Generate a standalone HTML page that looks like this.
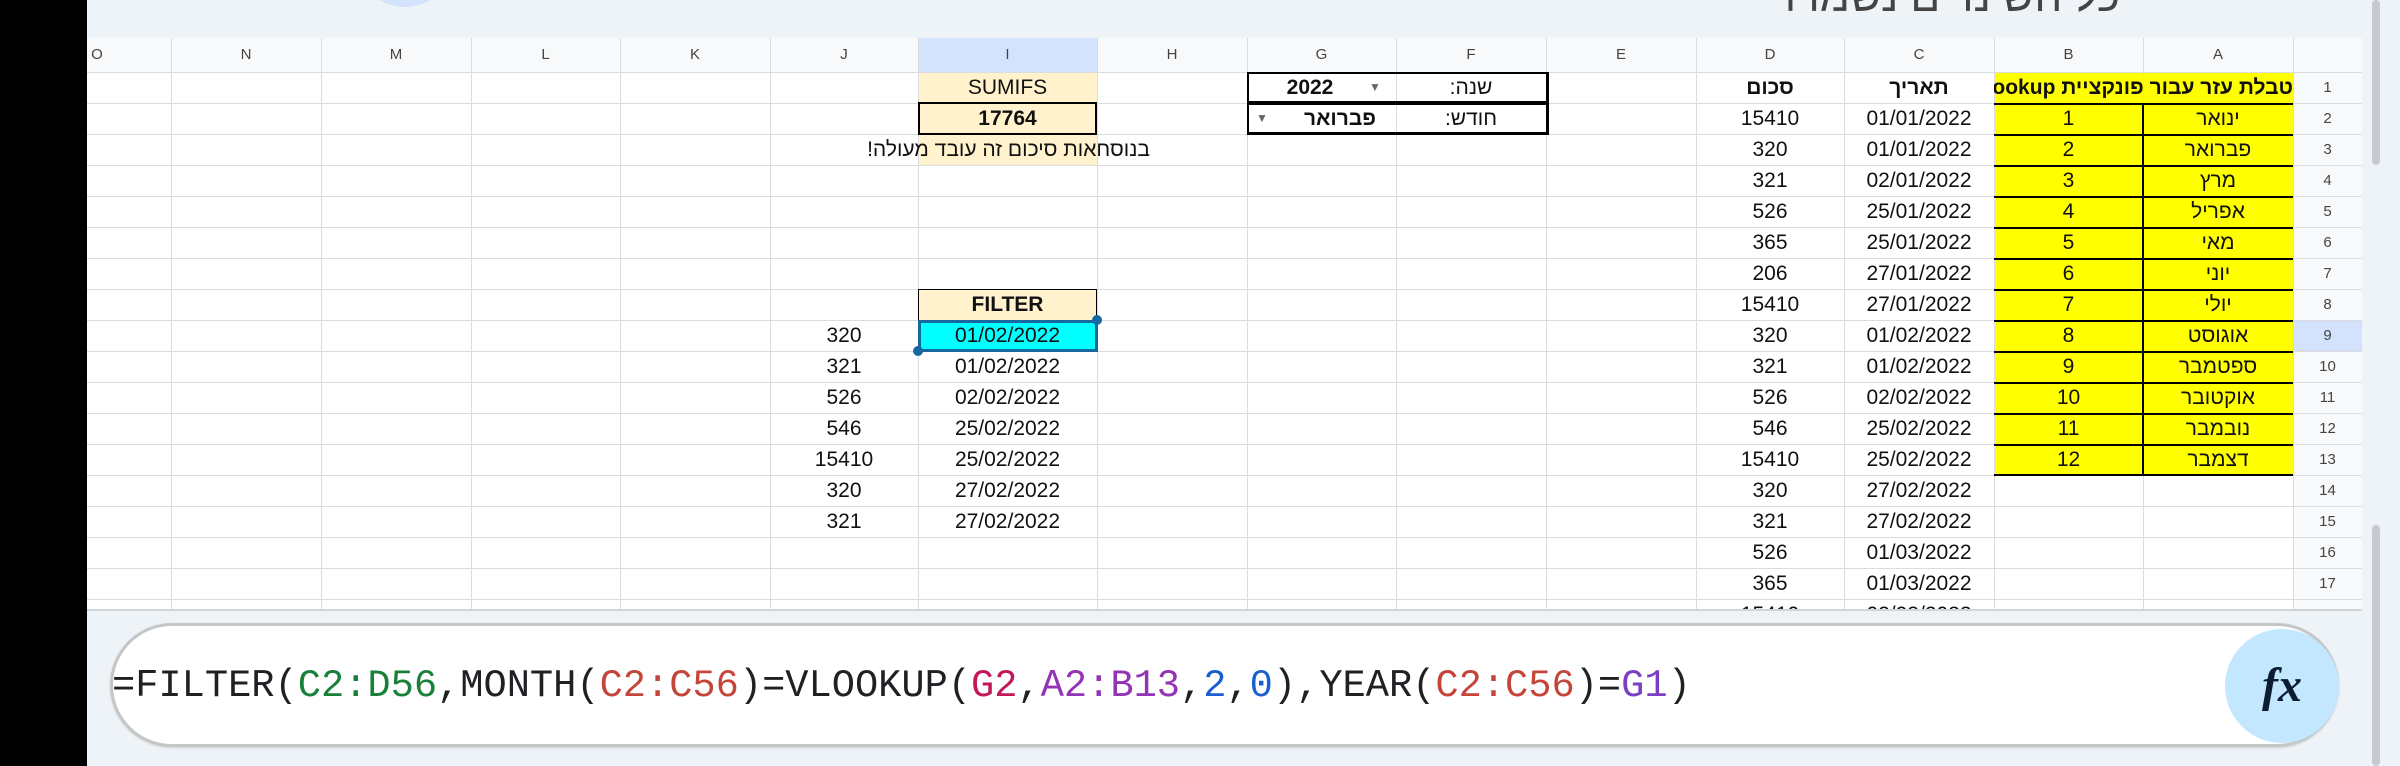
<!DOCTYPE html>
<html><head><meta charset="utf-8"><style>
*{margin:0;padding:0;box-sizing:border-box}
body{width:2400px;height:766px;overflow:hidden;background:#eef3f8;position:relative;font-family:"Liberation Sans","Noto Sans CJK JP",sans-serif}
.a{position:absolute}
.c{position:absolute;height:31px;line-height:31px;text-align:center;font-size:21px;color:#111;white-space:nowrap}
.b{font-weight:bold}
.h{position:absolute;top:38px;height:34px;line-height:34px;text-align:center;font-size:15px;color:#444}
.v{position:absolute;top:38px;width:1px;height:571px;background:#dadce0}
.hl{position:absolute;left:87px;width:2275px;height:1px;background:#dadce0}
.rn{position:absolute;left:2293px;width:69px;height:31px;line-height:31px;text-align:center;font-size:15px;color:#444}
.y{background:#ffff00}
.k{position:absolute;background:#000}
</style></head><body>
<div class="a" style="left:0;top:0;width:87px;height:766px;background:#000"></div>
<div class="a" style="left:365px;top:-55px;width:80px;height:62px;border-radius:50%;background:#d3e3fd"></div>
<div class="a" style="left:1700px;top:-28px;width:420px;font-size:44px;color:#444;direction:rtl;text-align:right;white-space:nowrap">כל השינויים נשמרו</div>
<!-- sheet -->
<div class="a" style="left:87px;top:38px;width:2275px;height:571px;background:#fff"></div>
<div class="a" style="left:87px;top:38px;width:2275px;height:34px;background:#f8f9fa"></div>
<div class="a" style="left:2293px;top:72px;width:69px;height:537px;background:#f8f9fa"></div>
<div class="a" style="left:918px;top:38px;width:179px;height:34px;background:#d3e3fd"></div>
<div class="a" style="left:2293px;top:320px;width:69px;height:31px;background:#d3e3fd"></div>
<!-- fills -->
<div class="a" style="left:918px;top:72px;width:179px;height:93px;background:#fff2cc"></div>
<div class="a" style="left:918px;top:289px;width:179px;height:31px;background:#fff2cc"></div>
<div class="a y" style="left:1994px;top:72px;width:299px;height:403px"></div>
<div class="a" style="left:918px;top:320px;width:179px;height:31px;background:#00ffff"></div>
<!-- verticals -->
<div class="v" style="left:171px"></div><div class="v" style="left:321px"></div><div class="v" style="left:471px"></div><div class="v" style="left:620px"></div><div class="v" style="left:770px"></div><div class="v" style="left:918px"></div><div class="v" style="left:1097px"></div><div class="v" style="left:1247px"></div><div class="v" style="left:1396px"></div><div class="v" style="left:1546px"></div><div class="v" style="left:1696px"></div><div class="v" style="left:1844px"></div><div class="v" style="left:1994px"></div><div class="v" style="left:2143px"></div><div class="v" style="left:2293px"></div>
<!-- horizontals -->
<div class="hl" style="top:72px"></div><div class="hl" style="top:103px"></div><div class="hl" style="top:134px"></div><div class="hl" style="top:165px"></div><div class="hl" style="top:196px"></div><div class="hl" style="top:227px"></div><div class="hl" style="top:258px"></div><div class="hl" style="top:289px"></div><div class="hl" style="top:320px"></div><div class="hl" style="top:351px"></div><div class="hl" style="top:382px"></div><div class="hl" style="top:413px"></div><div class="hl" style="top:444px"></div><div class="hl" style="top:475px"></div><div class="hl" style="top:506px"></div><div class="hl" style="top:537px"></div><div class="hl" style="top:568px"></div><div class="hl" style="top:599px"></div>
<!-- yellow borders -->
<div class="k" style="left:1994px;top:103px;width:299px;height:2px"></div>
<div class="k" style="left:1994px;top:134px;width:299px;height:2px"></div><div class="k" style="left:1994px;top:165px;width:299px;height:2px"></div><div class="k" style="left:1994px;top:196px;width:299px;height:2px"></div><div class="k" style="left:1994px;top:227px;width:299px;height:2px"></div><div class="k" style="left:1994px;top:258px;width:299px;height:2px"></div><div class="k" style="left:1994px;top:289px;width:299px;height:2px"></div><div class="k" style="left:1994px;top:320px;width:299px;height:2px"></div><div class="k" style="left:1994px;top:351px;width:299px;height:2px"></div><div class="k" style="left:1994px;top:382px;width:299px;height:2px"></div><div class="k" style="left:1994px;top:413px;width:299px;height:2px"></div><div class="k" style="left:1994px;top:444px;width:299px;height:2px"></div><div class="k" style="left:1994px;top:474px;width:299px;height:2px"></div>
<div class="k" style="left:2142px;top:103px;width:2px;height:372px"></div>
<!-- F/G boxes -->
<div class="a" style="left:1247px;top:72px;width:301px;height:31px;border:2px solid #000"></div>
<div class="a" style="left:1247px;top:103px;width:301px;height:31px;border:2px solid #000"></div>
<div class="a" style="left:1247px;top:72px;width:302px;height:63px;border:1px solid #000"></div>
<!-- I boxes -->
<div class="a" style="left:918px;top:102px;width:179px;height:33px;border:2px solid #000"></div>
<div class="a" style="left:918px;top:289px;width:179px;height:32px;border:1px solid #000;border-bottom:none"></div>
<!-- column headers -->
<div class="h" style="left:87px;width:20px">O</div><div class="h" style="left:171px;width:150px">N</div><div class="h" style="left:321px;width:150px">M</div><div class="h" style="left:471px;width:149px">L</div><div class="h" style="left:620px;width:150px">K</div><div class="h" style="left:770px;width:148px">J</div><div class="h" style="left:918px;width:179px">I</div><div class="h" style="left:1097px;width:150px">H</div><div class="h" style="left:1247px;width:149px">G</div><div class="h" style="left:1396px;width:150px">F</div><div class="h" style="left:1546px;width:150px">E</div><div class="h" style="left:1696px;width:148px">D</div><div class="h" style="left:1844px;width:150px">C</div><div class="h" style="left:1994px;width:149px">B</div><div class="h" style="left:2143px;width:150px">A</div>
<!-- row numbers -->
<div class="rn" style="top:72px">1</div><div class="rn" style="top:103px">2</div><div class="rn" style="top:134px">3</div><div class="rn" style="top:165px">4</div><div class="rn" style="top:196px">5</div><div class="rn" style="top:227px">6</div><div class="rn" style="top:258px">7</div><div class="rn" style="top:289px">8</div><div class="rn" style="top:320px">9</div><div class="rn" style="top:351px">10</div><div class="rn" style="top:382px">11</div><div class="rn" style="top:413px">12</div><div class="rn" style="top:444px">13</div><div class="rn" style="top:475px">14</div><div class="rn" style="top:506px">15</div><div class="rn" style="top:537px">16</div><div class="rn" style="top:568px">17</div><div class="rn" style="top:599px">18</div>
<!-- row 1 -->
<div class="c b" style="left:1994px;width:299px;top:72px;overflow:hidden;direction:rtl">טבלת עזר עבור פונקציית Vlookup</div>
<div class="c b" style="left:1844px;width:150px;top:72px">תאריך</div>
<div class="c b" style="left:1696px;width:148px;top:72px">סכום</div>
<div class="c" style="left:1396px;width:150px;top:72px;direction:rtl">שנה:</div>
<div class="c b" style="left:1260px;width:100px;top:72px">2022</div>
<div class="c" style="left:1365px;width:20px;top:72px;font-size:12px;color:#666">▼</div>
<div class="c" style="left:918px;width:179px;top:72px">SUMIFS</div>
<!-- row 2 -->
<div class="c" style="left:1396px;width:150px;top:103px;direction:rtl">חודש:</div>
<div class="c b" style="left:1290px;width:100px;top:103px">פברואר</div>
<div class="c" style="left:1252px;width:20px;top:103px;font-size:12px;color:#666">▼</div>
<div class="c b" style="left:918px;width:179px;top:103px">17764</div>
<div class="c" style="left:870px;width:280px;top:134px;direction:rtl">בנוסחאות סיכום זה עובד מעולה!</div>
<div class="c b" style="left:918px;width:179px;top:289px">FILTER</div>
<!-- A/B -->
<div class="c" style="left:2143px;width:150px;top:103px">ינואר</div><div class="c" style="left:1994px;width:149px;top:103px">1</div>
<div class="c" style="left:2143px;width:150px;top:134px">פברואר</div><div class="c" style="left:1994px;width:149px;top:134px">2</div>
<div class="c" style="left:2143px;width:150px;top:165px">מרץ</div><div class="c" style="left:1994px;width:149px;top:165px">3</div>
<div class="c" style="left:2143px;width:150px;top:196px">אפריל</div><div class="c" style="left:1994px;width:149px;top:196px">4</div>
<div class="c" style="left:2143px;width:150px;top:227px">מאי</div><div class="c" style="left:1994px;width:149px;top:227px">5</div>
<div class="c" style="left:2143px;width:150px;top:258px">יוני</div><div class="c" style="left:1994px;width:149px;top:258px">6</div>
<div class="c" style="left:2143px;width:150px;top:289px">יולי</div><div class="c" style="left:1994px;width:149px;top:289px">7</div>
<div class="c" style="left:2143px;width:150px;top:320px">אוגוסט</div><div class="c" style="left:1994px;width:149px;top:320px">8</div>
<div class="c" style="left:2143px;width:150px;top:351px">ספטמבר</div><div class="c" style="left:1994px;width:149px;top:351px">9</div>
<div class="c" style="left:2143px;width:150px;top:382px">אוקטובר</div><div class="c" style="left:1994px;width:149px;top:382px">10</div>
<div class="c" style="left:2143px;width:150px;top:413px">נובמבר</div><div class="c" style="left:1994px;width:149px;top:413px">11</div>
<div class="c" style="left:2143px;width:150px;top:444px">דצמבר</div><div class="c" style="left:1994px;width:149px;top:444px">12</div>
<!-- C/D -->
<div class="c" style="left:1844px;width:150px;top:103px">01/01/2022</div><div class="c" style="left:1696px;width:148px;top:103px">15410</div>
<div class="c" style="left:1844px;width:150px;top:134px">01/01/2022</div><div class="c" style="left:1696px;width:148px;top:134px">320</div>
<div class="c" style="left:1844px;width:150px;top:165px">02/01/2022</div><div class="c" style="left:1696px;width:148px;top:165px">321</div>
<div class="c" style="left:1844px;width:150px;top:196px">25/01/2022</div><div class="c" style="left:1696px;width:148px;top:196px">526</div>
<div class="c" style="left:1844px;width:150px;top:227px">25/01/2022</div><div class="c" style="left:1696px;width:148px;top:227px">365</div>
<div class="c" style="left:1844px;width:150px;top:258px">27/01/2022</div><div class="c" style="left:1696px;width:148px;top:258px">206</div>
<div class="c" style="left:1844px;width:150px;top:289px">27/01/2022</div><div class="c" style="left:1696px;width:148px;top:289px">15410</div>
<div class="c" style="left:1844px;width:150px;top:320px">01/02/2022</div><div class="c" style="left:1696px;width:148px;top:320px">320</div>
<div class="c" style="left:1844px;width:150px;top:351px">01/02/2022</div><div class="c" style="left:1696px;width:148px;top:351px">321</div>
<div class="c" style="left:1844px;width:150px;top:382px">02/02/2022</div><div class="c" style="left:1696px;width:148px;top:382px">526</div>
<div class="c" style="left:1844px;width:150px;top:413px">25/02/2022</div><div class="c" style="left:1696px;width:148px;top:413px">546</div>
<div class="c" style="left:1844px;width:150px;top:444px">25/02/2022</div><div class="c" style="left:1696px;width:148px;top:444px">15410</div>
<div class="c" style="left:1844px;width:150px;top:475px">27/02/2022</div><div class="c" style="left:1696px;width:148px;top:475px">320</div>
<div class="c" style="left:1844px;width:150px;top:506px">27/02/2022</div><div class="c" style="left:1696px;width:148px;top:506px">321</div>
<div class="c" style="left:1844px;width:150px;top:537px">01/03/2022</div><div class="c" style="left:1696px;width:148px;top:537px">526</div>
<div class="c" style="left:1844px;width:150px;top:568px">01/03/2022</div><div class="c" style="left:1696px;width:148px;top:568px">365</div>
<div class="c" style="left:1844px;width:150px;top:599px">02/03/2022</div><div class="c" style="left:1696px;width:148px;top:599px">15410</div>
<!-- I/J -->
<div class="c" style="left:918px;width:179px;top:320px">01/02/2022</div><div class="c" style="left:770px;width:148px;top:320px">320</div>
<div class="c" style="left:918px;width:179px;top:351px">01/02/2022</div><div class="c" style="left:770px;width:148px;top:351px">321</div>
<div class="c" style="left:918px;width:179px;top:382px">02/02/2022</div><div class="c" style="left:770px;width:148px;top:382px">526</div>
<div class="c" style="left:918px;width:179px;top:413px">25/02/2022</div><div class="c" style="left:770px;width:148px;top:413px">546</div>
<div class="c" style="left:918px;width:179px;top:444px">25/02/2022</div><div class="c" style="left:770px;width:148px;top:444px">15410</div>
<div class="c" style="left:918px;width:179px;top:475px">27/02/2022</div><div class="c" style="left:770px;width:148px;top:475px">320</div>
<div class="c" style="left:918px;width:179px;top:506px">27/02/2022</div><div class="c" style="left:770px;width:148px;top:506px">321</div>
<!-- selection -->
<div class="a" style="left:918px;top:320px;width:180px;height:32px;border:3px solid #1669a0"></div>
<div class="a" style="left:1092px;top:315px;width:10px;height:10px;border-radius:50%;background:#1669a0"></div>
<div class="a" style="left:913px;top:346px;width:10px;height:10px;border-radius:50%;background:#1669a0"></div>
<!-- bottom formula area -->
<div class="a" style="left:87px;top:609px;width:2275px;height:157px;background:#eef3f8"></div>
<div class="a" style="left:87px;top:609px;width:2275px;height:2px;background:#d0d4d8"></div>
<div class="a" style="left:110px;top:623px;width:2229px;height:124px;border-radius:62px;background:#fff;border:3px solid #c4c7c5;box-shadow:0 1px 2px rgba(0,0,0,.15)"></div>
<div class="a" style="left:112px;top:662px;font-family:'Liberation Mono',monospace;font-size:38.7px;line-height:48px;color:#202124;white-space:nowrap">=FILTER(<span style="color:#188038">C2:D56</span>,MONTH(<span style="color:#c5453a">C2:C56</span>)=VLOOKUP(<span style="color:#c2185b">G2</span>,<span style="color:#9334b6">A2:B13</span>,<span style="color:#1a5fd0">2</span>,<span style="color:#1a5fd0">0</span>),YEAR(<span style="color:#c5453a">C2:C56</span>)=<span style="color:#7b3fc4">G1</span>)</div>
<div class="a" style="left:2225px;top:629px;width:114px;height:114px;border-radius:50%;background:#c2e7ff"></div>
<div class="a" style="left:2225px;top:629px;width:114px;height:114px;line-height:114px;text-align:center;font-family:'Liberation Serif',serif;font-style:italic;font-weight:bold;font-size:48px;color:#0b1d33">fx</div>
<!-- right scrollbar -->
<div class="a" style="left:2362px;top:0;width:38px;height:766px;background:#eef3f8"></div>
<div class="a" style="left:2372px;top:0;width:8px;height:165px;border-radius:4px;background:#c7cbcf"></div>
<div class="a" style="left:2372px;top:525px;width:8px;height:241px;border-radius:4px;background:#c7cbcf"></div>
</body></html>
